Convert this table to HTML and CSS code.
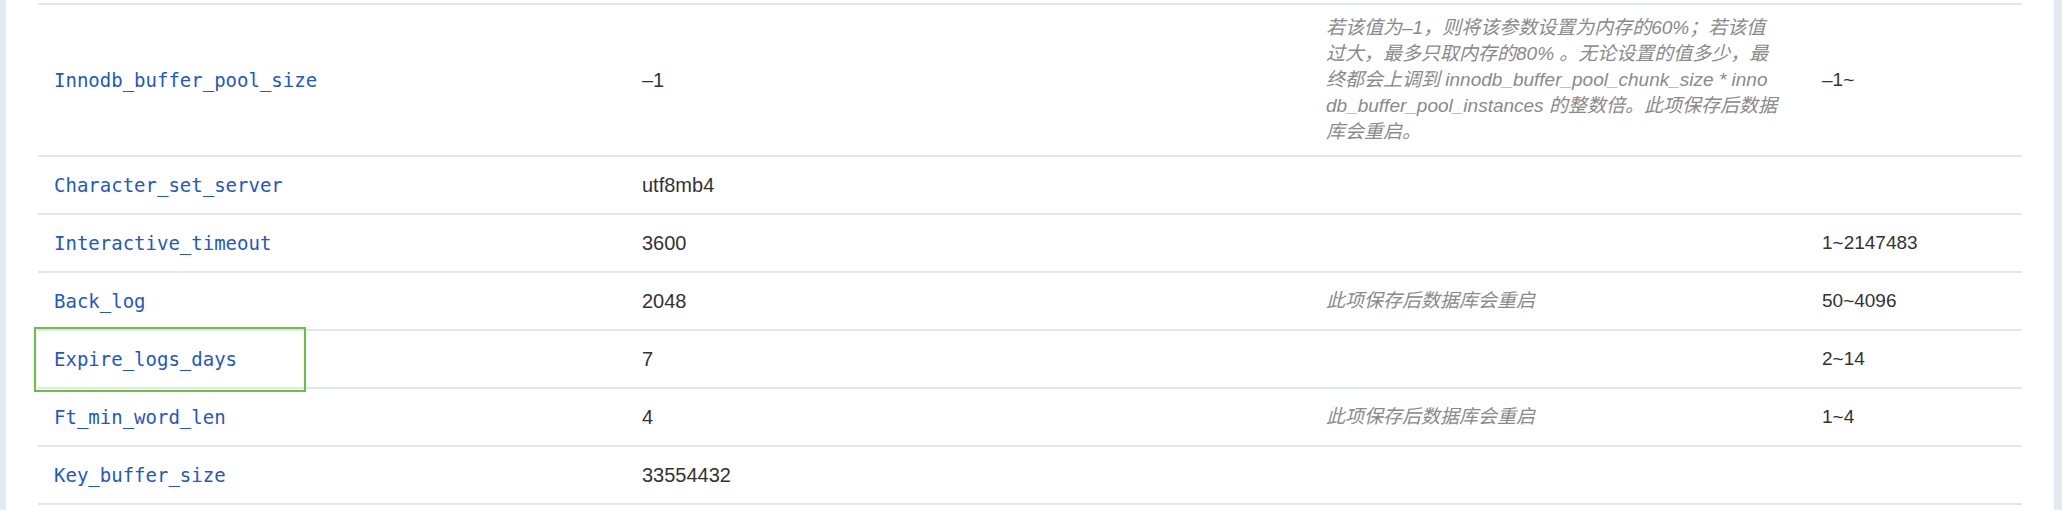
FILE: index.html
```html
<!DOCTYPE html>
<html lang="zh-CN">
<head>
<meta charset="utf-8">
<title>参数设置</title>
<link rel="stylesheet" href="styles.css">
</head>
<body>
<div class="page">
  <main class="panel">
    <table class="params">
      <colgroup>
        <col class="c-name">
        <col class="c-value">
        <col class="c-desc">
        <col class="c-range">
      </colgroup>
      <tbody>
        <tr>
          <td class="name"><a href="#">Innodb_buffer_pool_size</a></td>
          <td class="value">–1</td>
          <td class="desc">若该值为–1，则将该参数设置为内存的60%；若该值<br>过大，最多只取内存的80% 。无论设置的值多少，最<br>终都会上调到 innodb_buffer_pool_chunk_size * inno<br>db_buffer_pool_instances 的整数倍。此项保存后数据<br>库会重启。</td>
          <td class="range">–1~</td>
        </tr>
        <tr>
          <td class="name"><a href="#">Character_set_server</a></td>
          <td class="value">utf8mb4</td>
          <td class="desc"></td>
          <td class="range"></td>
        </tr>
        <tr>
          <td class="name"><a href="#">Interactive_timeout</a></td>
          <td class="value">3600</td>
          <td class="desc"></td>
          <td class="range">1~2147483</td>
        </tr>
        <tr>
          <td class="name"><a href="#">Back_log</a></td>
          <td class="value">2048</td>
          <td class="desc">此项保存后数据库会重启</td>
          <td class="range">50~4096</td>
        </tr>
        <tr>
          <td class="name marked"><a href="#">Expire_logs_days</a><span class="highlight"></span></td>
          <td class="value">7</td>
          <td class="desc"></td>
          <td class="range">2~14</td>
        </tr>
        <tr>
          <td class="name"><a href="#">Ft_min_word_len</a></td>
          <td class="value">4</td>
          <td class="desc">此项保存后数据库会重启</td>
          <td class="range">1~4</td>
        </tr>
        <tr>
          <td class="name"><a href="#">Key_buffer_size</a></td>
          <td class="value">33554432</td>
          <td class="desc"></td>
          <td class="range"></td>
        </tr>
      </tbody>
    </table>
  </main>
</div>
</body>
</html>
```
FILE: styles.css
```css
html, body {
  margin: 0;
  padding: 0;
  height: 100%;
}

body {
  background: #e4e9ef;
  font-family: "Liberation Sans", "Noto Sans CJK SC", sans-serif;
  color: #333;
}

.page {
  display: flex;
  height: 100%;
  padding: 0 8px 0 6px;
}

.panel {
  flex: 1;
  background: #fff;
  padding: 3px 32px 0;
  overflow: hidden;
}

.params {
  width: 100%;
  table-layout: fixed;
  border-collapse: collapse;
  border-top: 2px solid #e2e7eb;
}

.c-name { width: 588px; }
.c-value { width: 684px; }
.c-desc { width: 496px; }
.c-range { width: 216px; }

.params td {
  border-bottom: 2px solid #e2e7eb;
  padding: 15px 16px;
  line-height: 26px;
  vertical-align: middle;
  font-size: 19px;
  color: #333;
}

.params td.value {
  font-size: 20px;
}

.params td.name {
  font-family: "DejaVu Sans Mono", "Liberation Mono", monospace;
  font-size: 19px;
}

.name a {
  color: #1f58c4;
  text-decoration: none;
}

.params td.desc {
  padding-top: 10px;
  padding-bottom: 10px;
  font-size: 19px;
  font-style: italic;
  color: #8a8a8a;
  white-space: nowrap;
  font-family: "Liberation Sans", "Noto Sans CJK SC", sans-serif;
}

.marked {
  position: relative;
}

.highlight {
  position: absolute;
  top: -4px;
  left: -4px;
  width: 268px;
  height: 61px;
  border: 2px solid #62c442;
  pointer-events: none;
}
```
